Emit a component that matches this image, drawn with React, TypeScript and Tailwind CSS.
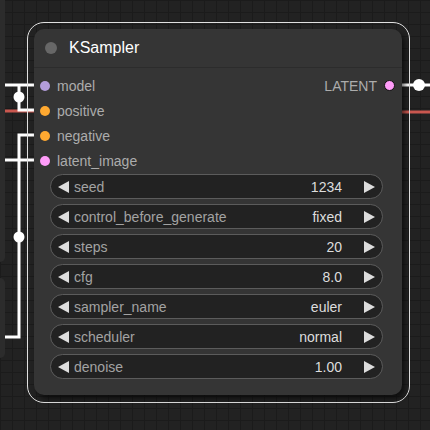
import React from 'react';

const font = { fontFamily: '"Liberation Sans", Arial, sans-serif' };

type Slot = { name: string; color: string };

const inputs: Slot[] = [
  { name: 'model', color: 'bg-[#b39ddb]' },
  { name: 'positive', color: 'bg-[#ffa931]' },
  { name: 'negative', color: 'bg-[#ffa931]' },
  { name: 'latent_image', color: 'bg-[#ff9cf9]' },
];

const widgets = [
  { label: 'seed', value: '1234' },
  { label: 'control_before_generate', value: 'fixed' },
  { label: 'steps', value: '20' },
  { label: 'cfg', value: '8.0' },
  { label: 'sampler_name', value: 'euler' },
  { label: 'scheduler', value: 'normal' },
  { label: 'denoise', value: '1.00' },
];

function Arrow({ dir }: { dir: 'left' | 'right' }) {
  return (
    <svg width="11" height="12" viewBox="0 0 11 12" className="shrink-0">
      {dir === 'left' ? (
        <polygon points="11,0 11,12 0,6" fill="#dddddd" />
      ) : (
        <polygon points="0,0 0,12 11,6" fill="#dddddd" />
      )}
    </svg>
  );
}

function Widget({ label, value }: { label: string; value: string }) {
  return (
    <div className="flex items-center h-[25px] w-[333px] rounded-full border border-[#5c5c5c] bg-[#222222] pl-[7px] pr-[7px]">
      <Arrow dir="left" />
      <span className="ml-[5px] text-[14px] text-[#a3a3a3] leading-none">{label}</span>
      <span className="ml-auto text-[14px] text-[#dddddd] leading-none">{value}</span>
      <div className="ml-[22px]">
        <Arrow dir="right" />
      </div>
    </div>
  );
}

function Wires() {
  return (
    <svg width="430" height="430" className="absolute left-0 top-0">
      {/* red links */}
      <line x1="5" y1="111" x2="36" y2="111" stroke="#c9574f" strokeWidth="3" />
      <line x1="400" y1="112" x2="430" y2="112" stroke="#c9574f" strokeWidth="3" />
      {/* white links, left */}
      <g stroke="#ffffff" strokeWidth="3" fill="none">
        <path d="M5 85 H36" />
        <path d="M19 85 V110 H36" />
        <path d="M36 135 H19 V337 H5" />
        <path d="M5 160 H36" />
        <path d="M400 85 H430" />
      </g>
      <circle cx="19" cy="97" r="5.5" fill="#ffffff" />
      <circle cx="19" cy="237" r="5.5" fill="#ffffff" />
      <circle cx="419" cy="85" r="6" fill="#ffffff" />
    </svg>
  );
}

export default function App() {
  return (
    <div
      className="relative w-[430px] h-[430px] overflow-hidden bg-[#222222] bg-[linear-gradient(to_right,#1b1b1b_1px,transparent_1px),linear-gradient(to_bottom,#1b1b1b_1px,transparent_1px)] bg-[size:12px_12px]"
      style={font}
    >
      {/* neighbouring nodes at the left edge */}
      <div className="absolute left-0 top-0 w-[5px] h-[262px] bg-[#2c2c2c] rounded-br-[5px]" />
      <div className="absolute left-0 top-[278px] w-[5px] h-[80px] bg-[#2c2c2c] rounded-tr-[5px] rounded-br-[5px]" />

      <Wires />

      {/* selection outline */}
      <div className="absolute left-[27px] top-[22px] w-[383px] h-[381px] rounded-[17px] border border-[#e0e0e0]" />

      {/* KSampler node */}
      <div className="absolute left-[34px] top-[29px] w-[368px] h-[366px] rounded-[10px] bg-[#353535] shadow-[3px_4px_5px_rgba(0,0,0,0.55)] flex flex-col">
        <div className="flex items-center h-[39px] pl-[11px] border-b border-[#2c2c2c]">
          <div className="w-[12px] h-[12px] rounded-full bg-[#676767]" />
          <span className="ml-[12px] text-[16px] text-white leading-none">KSampler</span>
        </div>

        <div className="flex flex-col pt-[5px]">
          {inputs.map((s, i) => (
            <div key={s.name} className="flex items-center h-[25px] pl-[6px] pr-[7px]">
              <div className={`w-[10px] h-[10px] rounded-full ${s.color}`} />
              <span className="ml-[7px] text-[14px] text-[#acacac] leading-none">{s.name}</span>
              {i === 0 && (
                <>
                  <span className="ml-auto text-[14px] text-[#acacac] leading-none">LATENT</span>
                  <div className="ml-[7px] w-[11px] h-[11px] rounded-full bg-[#ff9cf9] border border-[#111111]" />
                </>
              )}
            </div>
          ))}
        </div>

        <div className="flex flex-col gap-[5px] pl-[16px] mt-[1px]">
          {widgets.map((w) => (
            <Widget key={w.label} label={w.label} value={w.value} />
          ))}
        </div>
      </div>
    </div>
  );
}
